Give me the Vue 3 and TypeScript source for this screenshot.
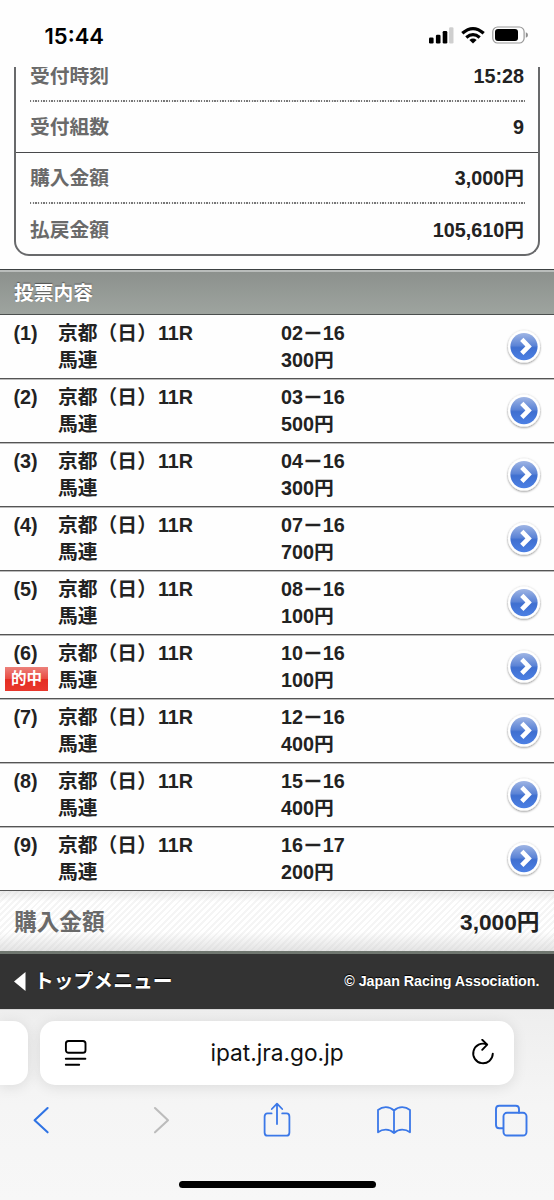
<script setup lang="ts">
interface Bet {
  no: number
  pair: [string, string]
  amount: string
  hit?: boolean
}

const summary = [
  { label: '受付時刻', value: '15:28', line: 'dotted' },
  { label: '受付組数', value: '9', line: 'solid' },
  { label: '購入金額', value: '3,000円', line: 'dotted' },
  { label: '払戻金額', value: '105,610円', line: 'last' },
]

const bets: Bet[] = [
  { no: 1, pair: ['02', '16'], amount: '300円' },
  { no: 2, pair: ['03', '16'], amount: '500円' },
  { no: 3, pair: ['04', '16'], amount: '300円' },
  { no: 4, pair: ['07', '16'], amount: '700円' },
  { no: 5, pair: ['08', '16'], amount: '100円' },
  { no: 6, pair: ['10', '16'], amount: '100円', hit: true },
  { no: 7, pair: ['12', '16'], amount: '400円' },
  { no: 8, pair: ['15', '16'], amount: '400円' },
  { no: 9, pair: ['16', '17'], amount: '200円' },
]
</script>

<template>
  <div class="screen">
    <header class="status">
      <span class="time">15:44</span>
      <svg class="indicators" width="102" height="20" viewBox="0 0 102 20">
        <rect x="2" y="11.5" width="4.6" height="6" rx="1.3" />
        <rect x="8.9" y="8.8" width="4.6" height="8.7" rx="1.3" />
        <rect x="15.7" y="5" width="4.6" height="12.5" rx="1.3" />
        <rect x="22.1" y="1.2" width="4.4" height="16.3" rx="1.3" fill="#cfcfcf" />
        <g fill="none" stroke="#000" stroke-width="3.2">
          <path d="M35.3 7.3Q46 -2.2 56.7 7.3" />
          <path d="M39.3 11.5Q46 5.6 52.7 11.5" />
        </g>
        <path d="M46 17.5L42.4 13.9Q46 11 49.6 13.9Z" />
        <rect x="65.8" y="1" width="31.3" height="16" rx="4.8" fill="none" stroke="#979797" stroke-width="1.2" />
        <rect x="68" y="3.1" width="23" height="11.8" rx="3" />
        <path d="M98.8 6.3Q101 7 101 9Q101 11 98.8 11.7Z" fill="#8e8e8e" />
      </svg>
    </header>

    <main class="page">
      <section class="summary">
        <div v-for="row in summary" :key="row.label" class="sum-row" :class="row.line">
          <span class="label">{{ row.label }}</span>
          <span>{{ row.value }}</span>
        </div>
      </section>

      <h2 class="heading">投票内容</h2>

      <div v-for="bet in bets" :key="bet.no" class="bet">
        <div class="num">
          <span>({{ bet.no }})</span>
          <span v-if="bet.hit" class="hit">的中</span>
        </div>
        <div class="race">京都（日）<span class="race-no">11R</span><br />馬連</div>
        <div class="stake">{{ bet.pair[0] }}<span class="dash">－</span>{{ bet.pair[1] }}<br />{{ bet.amount }}</div>
        <svg class="go" width="38" height="40" viewBox="0 0 38 40">
          <defs>
            <linearGradient :id="`blue${bet.no}`" x1="0" y1="0" x2="0" y2="1">
              <stop offset="0" stop-color="#9fb5e4" />
              <stop offset=".46" stop-color="#5c84d6" />
              <stop offset=".54" stop-color="#3f6fd0" />
              <stop offset="1" stop-color="#4c80e4" />
            </linearGradient>
            <filter :id="`shade${bet.no}`" x="-20%" y="-20%" width="140%" height="150%">
              <feDropShadow dx="0" dy=".8" stdDeviation="1.2" flood-color="#000" flood-opacity=".5" />
            </filter>
          </defs>
          <circle cx="19" cy="18.6" r="16" fill="#fff" :filter="`url(#shade${bet.no})`" />
          <circle cx="19" cy="18.6" r="13.6" :fill="`url(#blue${bet.no})`" />
          <path d="M16.8 11.4L23.6 18.4L16.8 25.4" fill="none" stroke="#fff" stroke-width="4.6" />
        </svg>
      </div>

      <div class="total">
        <span class="label">購入金額</span>
        <span>3,000円</span>
      </div>

      <footer class="foot">
        <svg width="12" height="19" viewBox="0 0 12 19"><path d="M0 9.5L11.5 0V19Z" fill="#fff" /></svg>
        <span class="top">トップメニュー</span>
        <small>© Japan Racing Association.</small>
      </footer>
    </main>

    <nav class="browser">
      <div class="tabs">
        <div class="prev"></div>
        <div class="address">
          <svg width="24" height="28" viewBox="0 0 24 28" fill="none" stroke="#000" stroke-width="1.9" stroke-linecap="round">
            <rect x="1.9" y="2" width="19.6" height="11.8" rx="2.6" />
            <path d="M1.8 19.7H21.4M1.8 25.8H15.2" />
          </svg>
          <span class="url">ipat.jra.go.jp</span>
          <svg width="24" height="28" viewBox="0 0 24 28" fill="none" stroke="#000" stroke-width="1.9" stroke-linecap="round" stroke-linejoin="round">
            <path d="M15.7 5.4A9.8 9.8 0 1 0 21.8 14.6" />
            <path d="M11.2 .8L16.2 5.6L11.2 10.8" />
          </svg>
        </div>
      </div>
      <div class="tools">
        <svg width="34" height="40" viewBox="0 0 34 40" stroke="#2f73e4" stroke-width="2.1"><path d="M23.6 8L10.6 20.3L23.6 32.3" /></svg>
        <svg width="34" height="40" viewBox="0 0 34 40" stroke="#bcbcbc" stroke-width="2.1"><path d="M12 8L25 20.3L12 32.3" /></svg>
        <svg width="34" height="40" viewBox="0 0 34 40" stroke="#3b78e8" stroke-width="1.8">
          <path d="M11.6 13.4H7.5Q4.6 13.4 4.6 16.7V32.4Q4.6 35.7 7.5 35.7H26.5Q29.4 35.7 29.4 32.4V16.7Q29.4 13.4 26.5 13.4H22.2" />
          <path d="M17 24V4M11.8 9L17 3.6L22.2 9" />
        </svg>
        <svg width="38" height="40" viewBox="0 0 38 40" stroke="#3b78e8" stroke-width="1.8">
          <path d="M19 10.5Q15.5 7.2 10.8 7.2Q6.5 7.2 3 10V32.3Q6.5 29.7 10.8 29.7Q15.5 29.7 19 33Q22.5 29.7 27.2 29.7Q31.5 29.7 35 32.3V10Q31.5 7.2 27.2 7.2Q22.5 7.2 19 10.5V33" />
        </svg>
        <svg width="34" height="40" viewBox="0 0 34 40" stroke="#3b78e8" stroke-width="1.9">
          <path d="M9 28.2H5.3Q2 28.2 2 24.9V9Q2 5.7 5.3 5.7H21.7Q25 5.7 25 9V12.7" />
          <rect x="9.5" y="12.8" width="23" height="22.7" rx="3.5" />
        </svg>
      </div>
      <div class="home"></div>
    </nav>
  </div>
</template>

<style>
body {
  margin: 0;
  background: #fff;
}
</style>

<style scoped>
.screen {
  width: 554px;
  height: 1200px;
  overflow: hidden;
  display: flex;
  flex-direction: column;
  background: #fefefe;
  color: #222;
  font: bold 19.8px/27px "Liberation Sans", "Noto Sans CJK JP", sans-serif;
}
.status {
  height: 67px;
  flex: none;
  box-sizing: border-box;
  padding: 22px 25px 0 44.5px;
  display: flex;
  justify-content: space-between;
  color: #000;
}
.time {
  font: 600 22px/28px Inter, sans-serif;
}
.indicators {
  margin-top: 4px;
}
.page {
  height: 942px;
  flex: none;
  overflow: hidden;
}
.summary {
  height: 189px;
  box-sizing: border-box;
  margin: 0 14px;
  border: 2px solid #68696b;
  border-top: 0;
  border-radius: 0 0 15px 15px;
  display: flex;
  flex-direction: column;
  justify-content: flex-end;
}
.sum-row {
  position: relative;
  box-sizing: border-box;
  height: 51px;
  padding: 0 14px;
  display: flex;
  flex: none;
  justify-content: space-between;
  align-items: center;
}
.sum-row.last {
  height: 50px;
  padding-top: 2px;
}
.sum-row.dotted::after {
  content: "";
  position: absolute;
  left: 14px;
  right: 13px;
  bottom: 0;
  height: 2px;
  background: repeating-linear-gradient(90deg, #777 0 1.33px, #f4f4f4 1.33px 2.67px);
}
.sum-row.solid {
  border-bottom: 1px solid #48494b;
}
.label {
  color: #6a6a6a;
}
.heading {
  box-sizing: border-box;
  height: 46px;
  margin: 13px 0 0;
  padding: 10px 14px 0;
  border-top: 1px solid #3d4142;
  border-bottom: 1px solid #4b4f4e;
  background: linear-gradient(#b9bdbb 0 2px, #8c918d 2px, #9ea49f);
  color: #fff;
  font-size: 19.8px;
  line-height: 27px;
  text-shadow: 0 -1px 1px #555;
}
.bet {
  box-sizing: border-box;
  height: 64px;
  padding: 5px 11px 0 13.5px;
  display: grid;
  grid-template-columns: 44.5px 223px 1fr 38px;
  border-bottom: 1px solid #555;
  box-shadow: 0 1px #bbb;
}
.race-no {
  margin-left: 1px;
}
.dash {
  -webkit-text-stroke: 0.7px #222;
}
.num {
  display: flex;
  flex-direction: column;
}
.hit {
  width: 43px;
  height: 24px;
  margin: 0 0 0 -8.5px;
  background: linear-gradient(#ec817b, #e94c43 48%, #e42d22 50%, #e9382d);
  color: #fff;
  font-size: 15.5px;
  line-height: 24px;
  text-align: center;
}
.go {
  margin-top: 8px;
}
.total {
  box-sizing: border-box;
  height: 63px;
  padding: 3px 14.5px 0 14px;
  border-bottom: 3px solid #707770;
  display: flex;
  align-items: center;
  justify-content: space-between;
  font-size: 22.7px;
  background:
    linear-gradient(#d9d9d988, #fff0 18%, #fff0 68%, #cccccc88),
    repeating-linear-gradient(135deg, #fff 0 2.5px, #f5f5f5 2.5px 4.5px);
}
.foot {
  height: 55px;
  padding: 0 14.5px 0 14px;
  display: flex;
  align-items: center;
  background: #333;
  color: #fff;
  text-shadow: 0 -1px 1px #000;
}
.top {
  margin-left: 8px;
}
.foot small {
  margin-left: auto;
  font-size: 14.25px;
}
.browser {
  flex: 1;
  background: linear-gradient(#eee, #f5f5f5 50%, #f7f7f7);
  border-top: 1px solid #d8d8d8;
}
.tabs {
  display: flex;
  gap: 12px;
  margin-top: 11px;
  height: 64px;
}
.tabs > div {
  background: #fff;
  box-shadow: 0 2px 14px #0000001a;
}
.prev {
  width: 28px;
  border-radius: 0 15px 15px 0;
}
.address {
  box-sizing: border-box;
  width: 474px;
  padding: 0 19px 0 24px;
  border-radius: 15px;
  display: flex;
  align-items: center;
  justify-content: space-between;
}
.url {
  margin-right: 5px;
  font: 400 22.7px/30px Inter, sans-serif;
  color: #111;
}
.tools {
  display: grid;
  grid-template-columns: 119px 117px 115px 119px 34px;
  padding-left: 24px;
  margin-top: 15px;
}
.tools svg {
  fill: none;
  stroke-linecap: round;
  stroke-linejoin: round;
}
.home {
  width: 197px;
  height: 7px;
  margin: 41px auto 0;
  border-radius: 4px;
  background: #000;
}
</style>
